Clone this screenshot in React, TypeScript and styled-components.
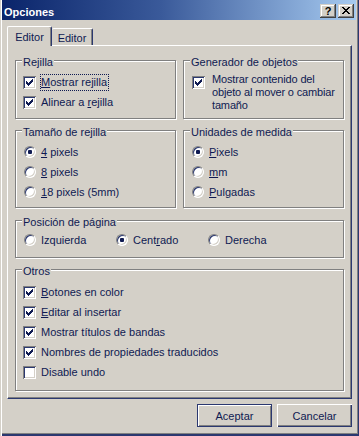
import styled, { createGlobalStyle } from "styled-components";

const INK = "#0f1a52";
const FACE = "#d4d0c8";
const SHADOW = "#808080";
const DARK = "#2b3870";

const GlobalStyle = createGlobalStyle`
  html, body {
    margin: 0;
    padding: 0;
    background: ${FACE};
  }
  body {
    font-family: "Liberation Sans", Arial, sans-serif;
    font-size: 11px;
    color: ${INK};
  }
  * {
    box-sizing: border-box;
  }
`;

const Window = styled.div`
  width: 359px;
  height: 436px;
  display: flex;
  flex-direction: column;
  padding: 0 3px 0 2px;
  background: ${FACE};
  box-shadow: inset 1px 0 0 ${FACE}, inset 2px 0 0 #fff,
    inset -1px -2px 0 ${DARK}, inset -2px -3px 0 ${SHADOW};
`;

const TitleBar = styled.div`
  flex: none;
  height: 20px;
  display: flex;
  align-items: center;
  padding: 1px 2px 0 2px;
  background: linear-gradient(90deg, #0a246a 0%, #3a5a9a 45%, #a6caf0 100%);
`;

const Title = styled.span`
  flex: 1;
  font-weight: 700;
  color: #fff;
  line-height: 14px;
  padding-top: 3px;
`;

const CaptionButton = styled.span`
  width: 16px;
  height: 14px;
  margin-left: 2px;
  display: flex;
  align-items: center;
  justify-content: center;
  background: ${FACE};
  color: #000;
  font-weight: 700;
  font-size: 11px;
  line-height: 14px;
  box-shadow: inset -1px -1px 0 #404040, inset 1px 1px 0 ${FACE},
    inset -2px -2px 0 ${SHADOW}, inset 2px 2px 0 #fff;
`;

const TabStrip = styled.div`
  flex: none;
  height: 19px;
  margin: 6px 0 0 5px;
  display: flex;
  align-items: flex-end;
  position: relative;
  z-index: 1;
`;

const Tab = styled.div<{ $active?: boolean }>`
  display: flex;
  align-items: center;
  justify-content: center;
  background: ${FACE};
  border-top: 1px solid #fff;
  border-left: ${({ $active }) => ($active ? "1px solid #fff" : "none")};
  border-right: 1px solid ${DARK};
  border-radius: 2px 2px 0 0;
  box-shadow: inset -1px 0 0 ${SHADOW};
  width: ${({ $active }) => ($active ? "45px" : "41px")};
  height: ${({ $active }) => ($active ? "20px" : "17px")};
  margin-bottom: ${({ $active }) => ($active ? "-1px" : "0")};
  padding-top: ${({ $active }) => ($active ? "0" : "1px")};
`;

const Panel = styled.div`
  flex: none;
  height: 354px;
  margin: 0 4px 0 5px;
  padding: 14px 7px 0 7px;
  display: flex;
  flex-direction: column;
  gap: 11px;
  border: 1px solid;
  border-color: #fff ${DARK} ${DARK} #fff;
  box-shadow: inset -1px -1px 0 ${SHADOW};
`;

const TopGrid = styled.div`
  display: grid;
  grid-template-columns: 161px 161px;
  column-gap: 7px;
`;

const Group = styled.div<{ $pb: number; $mt?: number }>`
  display: flex;
  flex-direction: column;
  margin-top: ${({ $mt }) => $mt ?? 0}px;
  padding: 0 6px ${({ $pb }) => $pb}px 7px;
  border: 1px solid ${SHADOW};
  box-shadow: 1px 1px 0 #fff, inset 1px 1px 0 #fff;
`;

const Legend = styled.div`
  align-self: flex-start;
  margin: -6px 0 0 -1px;
  padding: 0 1px;
  line-height: 14px;
  background: ${FACE};
`;

const Rows = styled.div<{ $mt: number }>`
  margin-top: ${({ $mt }) => $mt}px;
  display: flex;
  flex-direction: column;
`;

const RadioLine = styled.div<{ $mt: number }>`
  margin-top: ${({ $mt }) => $mt}px;
  display: grid;
  grid-template-columns: 92px 92px 92px;
`;

const Option = styled.div`
  display: flex;
  align-items: center;
  height: 20px;
  white-space: nowrap;
`;

const WrapOption = styled.div`
  display: flex;
  align-items: flex-start;
  padding-left: 1px;
  white-space: nowrap;
`;

const CheckBox = styled.span<{ $mt?: number }>`
  flex: none;
  width: 13px;
  height: 13px;
  margin-top: ${({ $mt }) => $mt ?? 0}px;
  display: flex;
  align-items: center;
  justify-content: center;
  background: #fff;
  box-shadow: inset 1px 1px 0 ${SHADOW}, inset -1px -1px 0 #fff,
    inset 2px 2px 0 ${DARK}, inset -2px -2px 0 ${FACE};
`;

const Radio = styled.span`
  flex: none;
  width: 12px;
  height: 12px;
  margin-left: 1px;
  display: flex;
  align-items: center;
  justify-content: center;
  border-radius: 50%;
  background: #fff;
  border: 1px solid;
  border-color: ${SHADOW} #fff #fff ${SHADOW};
  box-shadow: inset 1px 1px 0 ${DARK}, inset -1px -1px 0 ${FACE};
`;

const Dot = styled.span`
  width: 4px;
  height: 4px;
  border-radius: 1px;
  background: ${INK};
`;

const Text = styled.span<{ $focus?: boolean }>`
  margin-left: 4px;
  line-height: 15px;
  padding: 0 1px 0 0;
  border: 1px ${({ $focus }) => ($focus ? "dotted" : "solid")}
    ${({ $focus }) => ($focus ? INK : "transparent")};
`;

const WrapText = styled.span`
  margin: 0 0 0 7px;
  line-height: 13px;
  letter-spacing: -0.15px;
`;

const Acc = styled.span`
  text-decoration: underline;
  text-underline-offset: 1px;
`;

const ButtonRow = styled.div`
  flex: none;
  display: flex;
  justify-content: flex-end;
  gap: 5px;
  margin-top: 5px;
  padding-right: 4px;
`;

const Button = styled.button<{ $default?: boolean }>`
  width: 75px;
  height: 23px;
  padding: 0;
  font: inherit;
  color: ${INK};
  background: ${FACE};
  border: ${({ $default }) => ($default ? `1px solid ${DARK}` : "none")};
  box-shadow: ${({ $default }) =>
    $default
      ? `inset 1px 1px 0 #fff, inset -1px -1px 0 ${SHADOW}`
      : `inset 1px 1px 0 #fff, inset -1px -1px 0 ${DARK}, inset -2px -2px 0 ${SHADOW}`};
`;

const Check = () => (
  <svg width="7" height="7" viewBox="0 0 7 7">
    <path
      fill={INK}
      d="M0 2h1v3h-1z M1 3h1v3h-1z M2 4h1v3h-1z M3 3h1v3h-1z M4 2h1v3h-1z M5 1h1v3h-1z M6 0h1v3h-1z"
    />
  </svg>
);

const CloseGlyph = () => (
  <svg width="8" height="7" viewBox="0 0 8 7">
    <path
      fill="#000"
      d="M0 0h2v1h-2z M6 0h2v1h-2z M1 1h2v1h-2z M5 1h2v1h-2z M2 2h4v1h-4z M3 3h2v1h-2z M2 4h4v1h-4z M1 5h2v1h-2z M5 5h2v1h-2z M0 6h2v1h-2z M6 6h2v1h-2z"
    />
  </svg>
);

const CheckRow = ({
  checked,
  focus,
  children,
}: {
  checked?: boolean;
  focus?: boolean;
  children: React.ReactNode;
}) => (
  <Option>
    <CheckBox>{checked && <Check />}</CheckBox>
    <Text $focus={focus}>{children}</Text>
  </Option>
);

const RadioRow = ({
  selected,
  children,
}: {
  selected?: boolean;
  children: React.ReactNode;
}) => (
  <Option>
    <Radio>{selected && <Dot />}</Radio>
    <Text>{children}</Text>
  </Option>
);

export default function App() {
  return (
    <>
      <GlobalStyle />
      <Window>
        <TitleBar>
          <Title>Opciones</Title>
          <CaptionButton>?</CaptionButton>
          <CaptionButton>
            <CloseGlyph />
          </CaptionButton>
        </TitleBar>

        <TabStrip>
          <Tab $active>Editor</Tab>
          <Tab>Editor</Tab>
        </TabStrip>

        <Panel>
          <TopGrid>
            <Group $pb={6}>
              <Legend>Rejilla</Legend>
              <Rows $mt={3}>
                <CheckRow checked focus>
                  <Acc>M</Acc>ostrar rejilla
                </CheckRow>
                <CheckRow checked>
                  Alinear a <Acc>r</Acc>ejilla
                </CheckRow>
              </Rows>
            </Group>
            <Group $pb={6}>
              <Legend>Generador de objetos</Legend>
              <Rows $mt={4}>
                <WrapOption>
                  <CheckBox $mt={3}>
                    <Check />
                  </CheckBox>
                  <WrapText>
                    Mostrar contenido del
                    <br />
                    objeto al mover o cambiar
                    <br />
                    tamaño
                  </WrapText>
                </WrapOption>
              </Rows>
            </Group>
          </TopGrid>

          <TopGrid>
            <Group $pb={5}>
              <Legend>Tamaño de rejilla</Legend>
              <Rows $mt={3}>
                <RadioRow selected>
                  <Acc>4</Acc> pixels
                </RadioRow>
                <RadioRow>
                  <Acc>8</Acc> pixels
                </RadioRow>
                <RadioRow>
                  <Acc>1</Acc>8 pixels (5mm)
                </RadioRow>
              </Rows>
            </Group>
            <Group $pb={5}>
              <Legend>Unidades de medida</Legend>
              <Rows $mt={3}>
                <RadioRow selected>
                  <Acc>P</Acc>ixels
                </RadioRow>
                <RadioRow>
                  <Acc>m</Acc>m
                </RadioRow>
                <RadioRow>
                  <Acc>P</Acc>ulgadas
                </RadioRow>
              </Rows>
            </Group>
          </TopGrid>

          <Group $pb={7} $mt={1}>
            <Legend>Posición de página</Legend>
            <RadioLine $mt={1}>
              <RadioRow>Izquierda</RadioRow>
              <RadioRow selected>
                Cent<Acc>r</Acc>ado
              </RadioRow>
              <RadioRow>Derecha</RadioRow>
            </RadioLine>
          </Group>

          <Group $pb={8}>
            <Legend>Otros</Legend>
            <Rows $mt={4}>
              <CheckRow checked>
                <Acc>B</Acc>otones en color
              </CheckRow>
              <CheckRow checked>
                <Acc>E</Acc>ditar al insertar
              </CheckRow>
              <CheckRow checked>Mostrar títulos de bandas</CheckRow>
              <CheckRow checked>Nombres de propiedades traducidos</CheckRow>
              <CheckRow>Disable undo</CheckRow>
            </Rows>
          </Group>
        </Panel>

        <ButtonRow>
          <Button $default>Aceptar</Button>
          <Button>Cancelar</Button>
        </ButtonRow>
      </Window>
    </>
  );
}
